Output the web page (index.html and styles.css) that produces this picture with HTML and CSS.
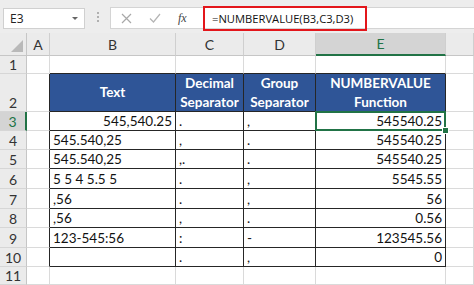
FILE: index.html
```html
<!DOCTYPE html>
<html lang="en">
<head>
  <meta charset="UTF-8" />
  <title>NUMBERVALUE</title>
  <link rel="stylesheet" href="styles.css">
</head>
<body>
  <div class="formula-bar">
    <div class="name-box">
      <span>E3</span>
      <span class="caret"></span>
    </div>
    <div class="grip"><i></i><i></i><i></i></div>
    <div class="formula-box">
      <div class="fb-icons">
        <svg width="11" height="11" viewBox="0 0 11 11"><path d="M1 1 L10 10 M10 1 L1 10" stroke="#a8a8a8" stroke-width="1.2" fill="none"/></svg>
        <svg width="12" height="10" viewBox="0 0 12 10"><path d="M1 5.5 L4.5 9 L11 1" stroke="#b4b4b4" stroke-width="1.2" fill="none"/></svg>
        <span class="fx">fx</span>
      </div>
      <div class="formula-text">=NUMBERVALUE(B3,C3,D3)</div>
    </div>
  </div>

  <div class="sheet">
    <!-- column headers -->
    <div class="corner"><span class="tri"></span></div>
    <div class="ch">A</div>
    <div class="ch">B</div>
    <div class="ch">C</div>
    <div class="ch">D</div>
    <div class="ch sel">E</div>
    <div class="ch"></div>

    <!-- row 1 -->
    <div class="rh">1</div>
    <div class="c"></div>
    <div class="c top"></div>
    <div class="c top"></div>
    <div class="c top"></div>
    <div class="c top"></div>
    <div class="c"></div>

    <!-- row 2 -->
    <div class="rh">2</div>
    <div class="c left"></div>
    <div class="t hd">Text</div>
    <div class="t hd">Decimal<br>Separator</div>
    <div class="t hd">Group<br>Separator</div>
    <div class="t hd">NUMBERVALUE<br>Function</div>
    <div class="c"></div>

    <!-- row 3 -->
    <div class="rh sel">3</div>
    <div class="c left"></div>
    <div class="t r">545,540.25</div>
    <div class="t">.</div>
    <div class="t">,</div>
    <div class="t r active">545540.25</div>
    <div class="c"></div>

    <!-- row 4 -->
    <div class="rh">4</div>
    <div class="c left"></div>
    <div class="t">545.540,25</div>
    <div class="t">,</div>
    <div class="t">.</div>
    <div class="t r">545540.25</div>
    <div class="c"></div>

    <!-- row 5 -->
    <div class="rh">5</div>
    <div class="c left"></div>
    <div class="t">545.540,25</div>
    <div class="t">,.</div>
    <div class="t">.</div>
    <div class="t r">545540.25</div>
    <div class="c"></div>

    <!-- row 6 -->
    <div class="rh">6</div>
    <div class="c left"></div>
    <div class="t">5 5 4 5.5 5</div>
    <div class="t">.</div>
    <div class="t">,</div>
    <div class="t r">5545.55</div>
    <div class="c"></div>

    <!-- row 7 -->
    <div class="rh">7</div>
    <div class="c left"></div>
    <div class="t">,56</div>
    <div class="t">.</div>
    <div class="t">,</div>
    <div class="t r">56</div>
    <div class="c"></div>

    <!-- row 8 -->
    <div class="rh">8</div>
    <div class="c left"></div>
    <div class="t">,56</div>
    <div class="t">,</div>
    <div class="t">.</div>
    <div class="t r">0.56</div>
    <div class="c"></div>

    <!-- row 9 -->
    <div class="rh">9</div>
    <div class="c left"></div>
    <div class="t">123-545:56</div>
    <div class="t">:</div>
    <div class="t">-</div>
    <div class="t r">123545.56</div>
    <div class="c"></div>

    <!-- row 10 -->
    <div class="rh">10</div>
    <div class="c left"></div>
    <div class="t"></div>
    <div class="t">.</div>
    <div class="t">,</div>
    <div class="t r">0</div>
    <div class="c"></div>

    <!-- row 11 -->
    <div class="rh">11</div>
    <div class="c"></div>
    <div class="c"></div>
    <div class="c"></div>
    <div class="c"></div>
    <div class="c"></div>
    <div class="c"></div>
  </div>
</body>
</html>
```

FILE: styles.css
```css
body {
  margin: 0;
  font-family: Lato, "Liberation Sans", sans-serif;
  background: #fff;
  color: #111;
  overflow: hidden;
}

/* formula bar */
.formula-bar {
  height: 33px;
  background: #ededed;
  display: flex;
  align-items: flex-start;
}

.name-box {
  margin: 8px 0 0 3px;
  width: 82px;
  height: 21px;
  box-sizing: border-box;
  background: #fff;
  border: 1px solid #d0d0d0;
  display: flex;
  align-items: center;
  justify-content: space-between;
  padding: 0 6px 0 6px;
  font-family: "Open Sans", sans-serif;
  font-size: 12px;
  color: #222;
}

.caret {
  width: 0;
  height: 0;
  border-left: 3px solid transparent;
  border-right: 3px solid transparent;
  border-top: 3px solid #666;
}

.grip {
  width: 25px;
  height: 33px;
  display: flex;
  flex-direction: column;
  align-items: center;
  justify-content: center;
  gap: 2px;
}

.grip i {
  width: 2px;
  height: 2px;
  background: #b0b0b0;
}

.formula-box {
  flex: 1;
  margin-top: 7px;
  height: 22px;
  box-sizing: border-box;
  background: #fff;
  border: 1px solid #d4d4d4;
  border-right: none;
  display: flex;
  align-items: center;
}

.fb-icons {
  width: 92px;
  display: flex;
  align-items: center;
  gap: 17px;
  padding-left: 10px;
  box-sizing: border-box;
}

.fx {
  font-family: "Liberation Serif", serif;
  font-style: italic;
  font-size: 12px;
  color: #444;
}

.formula-text {
  width: 164px;
  height: 25px;
  box-sizing: border-box;
  border: 2px solid #e3161b;
  padding-left: 7px;
  display: flex;
  align-items: center;
  font-family: "Open Sans", sans-serif;
  font-size: 11.2px;
  color: #111;
}

/* sheet grid */
.sheet {
  display: grid;
  grid-template-columns: 27px 23px 126px 68px 72px 130px 1fr;
  grid-template-rows: 23px 18px 38px 19px 19px 19px 20px 20px 19px 20px 19px 18px;
}

.sheet > div {
  box-sizing: border-box;
  display: flex;
  align-items: center;
  white-space: nowrap;
  overflow: hidden;
  font-size: 13.5px;
}

.corner {
  background: #ebebeb;
  border-right: 1px solid #c6c6c6;
  border-bottom: 1px solid #c6c6c6;
  position: relative;
}

.tri {
  position: absolute;
  right: 3px;
  bottom: 3px;
  width: 0;
  height: 0;
  border-left: 12px solid transparent;
  border-bottom: 12px solid #b9b9b9;
}

.sheet > .ch {
  background: #ebebeb;
  border-right: 1px solid #cfcfcf;
  border-bottom: 1px solid #c6c6c6;
  justify-content: center;
  color: #333;
  font-size: 14px;
}

.sheet > .ch.sel {
  background: #d4d4d4;
  color: #217346;
  border-bottom: 2px solid #217346;
}

.sheet > .rh {
  background: #ebebeb;
  border-right: 1px solid #c6c6c6;
  border-bottom: 1px solid #d6d6d6;
  justify-content: center;
  align-items: flex-end;
  color: #333;
  font-size: 14px;
  line-height: 17px;
}

.sheet > .rh.sel {
  background: #d4d4d4;
  color: #217346;
  border-right: 2px solid #217346;
}

.c {
  border-right: 1px solid #dadada;
  border-bottom: 1px solid #dadada;
}

.c.top {
  border-bottom-color: #262626;
}

.c.left {
  border-right-color: #262626;
}

/* bordered table */
.t {
  border-right: 1px solid #262626;
  border-bottom: 1px solid #262626;
  padding: 0 3px;
}

.t.r {
  justify-content: flex-end;
}

.t.hd {
  background: #2f5597;
  color: #fff;
  font-weight: 700;
  justify-content: center;
  text-align: center;
  line-height: 19px;
}

.sheet > .active {
  position: relative;
  overflow: visible;
}

.active::before {
  content: "";
  position: absolute;
  left: -1px;
  top: -1px;
  right: -1px;
  bottom: -1px;
  border: 2px solid #217346;
  z-index: 1;
}

.active::after {
  content: "";
  position: absolute;
  right: -4px;
  bottom: -4px;
  width: 5px;
  height: 5px;
  background: #217346;
  border: 1px solid #fff;
  z-index: 2;
}
```
